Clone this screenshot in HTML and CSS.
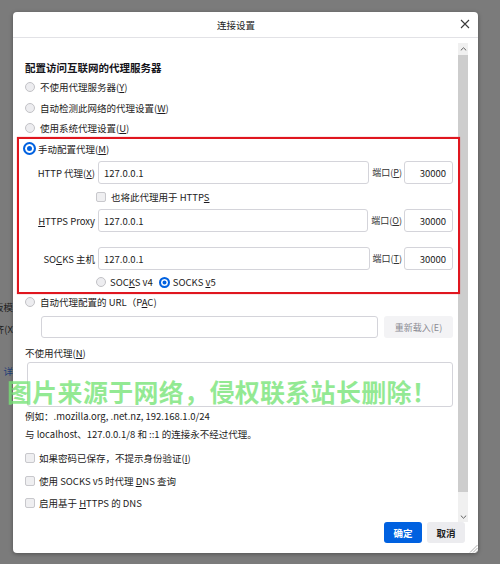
FILE: index.html
```html
<!DOCTYPE html>
<html lang="zh-CN">
<head>
<meta charset="utf-8">
<title>连接设置</title>
<link rel="stylesheet" href="styles.css">
</head>
<body>
<div class="page">
  <div class="bg-col">
    <div class="bg-line l1">栏板模</div>
    <div class="bg-line l2">对齐(X</div>
    <div class="bg-line l3 link">详</div>
  </div>
</div>

<div class="dialog">
  <div class="header">
    <div class="title">连接设置</div>
    <svg class="close" width="10" height="10" viewBox="0 0 10 10"><path d="M1 1L9 9M9 1L1 9" stroke="#3a3a3a" stroke-width="1.1" fill="none"/></svg>
  </div>
  <div class="main">
    <div class="content">
      <div class="heading">配置访问互联网的代理服务器</div>
      <div class="row r-radio"><span class="radio"></span><span>不使用代理服务器(<u>Y</u>)</span></div>
      <div class="row r-radio"><span class="radio"></span><span>自动检测此网络的代理设置(<u>W</u>)</span></div>
      <div class="row r-radio"><span class="radio"></span><span>使用系统代理设置(<u>U</u>)</span></div>
      <div class="row r-radio"><span class="radio on big"></span><span>手动配置代理(<u>M</u>)</span></div>

      <div class="proxy-row first">
        <span class="plabel">HTTP 代理(<u>X</u>)</span>
        <span class="input">127.0.0.1</span>
        <span class="portlabel">端口(<u>P</u>)</span>
        <span class="input port">30000</span>
      </div>
      <div class="row r-check"><span class="check"></span><span>也将此代理用于 HTTP<u>S</u></span></div>
      <div class="proxy-row">
        <span class="plabel"><u>H</u>TTPS Proxy</span>
        <span class="input">127.0.0.1</span>
        <span class="portlabel">端口(<u>O</u>)</span>
        <span class="input port">30000</span>
      </div>
      <div class="proxy-row socks">
        <span class="plabel">SO<u>C</u>KS 主机</span>
        <span class="input">127.0.0.1</span>
        <span class="portlabel">端口(<u>T</u>)</span>
        <span class="input port">30000</span>
      </div>
      <div class="row r-socksv">
        <span class="radio"></span><span>SOC<u>K</u>S v4</span>
        <span class="radio on v5"></span><span>SOCKS <u>v</u>5</span>
      </div>

      <div class="row r-pac"><span class="radio"></span><span>自动代理配置的 URL（P<u>A</u>C)</span></div>
      <div class="pac-row">
        <span class="input pac"></span>
        <span class="btn-reload">重新载入(E)</span>
      </div>

      <div class="noproxy-label">不使用代理(<u>N</u>)</div>
      <div class="textarea"></div>
      <div class="note">例如：.mozilla.org, .net.nz, 192.168.1.0/24</div>
      <div class="note">与 localhost、127.0.0.1/8 和 ::1 的连接永不经过代理。</div>

      <div class="checks">
        <div class="row r-check2"><span class="check"></span><span>如果密码已保存，不提示身份验证(<u>I</u>)</span></div>
        <div class="row r-check2"><span class="check"></span><span>使用 SOCKS v5 时代理 <u>D</u>NS 查询</span></div>
        <div class="row r-check2"><span class="check"></span><span>启用基于 <u>H</u>TTPS 的 DNS</span></div>
      </div>
    </div>
    <div class="scrollbar">
      <div class="sb-arrow up"><svg width="7" height="4" viewBox="0 0 7 4"><path d="M0.8 3.4L3.5 0.8L6.2 3.4" stroke="#606060" stroke-width="1" fill="none"/></svg></div>
      <div class="sb-thumb"></div>
      <div class="sb-track"></div>
      <div class="sb-arrow down"><svg width="7" height="4" viewBox="0 0 7 4"><path d="M0.8 0.6L3.5 3.2L6.2 0.6" stroke="#606060" stroke-width="1" fill="none"/></svg></div>
    </div>
  </div>
  <div class="footer">
    <span class="btn primary">确定</span>
    <span class="btn">取消</span>
  </div>
  <svg class="grip" width="9" height="9" viewBox="0 0 9 9"><path d="M8.5 1L1 8.5M8.5 4L4 8.5M8.5 7L7 8.5" stroke="#9a9a9a" stroke-width="0.8" fill="none"/></svg>
  <div class="redbox"></div>
</div>

<div class="watermark">图片来源于网络，侵权联系站长删除！</div>
</body>
</html>
```

FILE: styles.css
```css
html, body {
  margin: 0;
  padding: 0;
}
body {
  width: 500px;
  height: 564px;
  overflow: hidden;
  background: #7b7b7b;
  font-family: "Segoe UI", "Noto Sans CJK SC", "Noto Sans", sans-serif;
  font-size: 9.5px;
  color: #1c1b22;
  position: relative;
}
u { text-underline-offset: 1px; }

.page {
  width: 500px;
  height: 564px;
}
.bg-col {
  width: 13px;
  overflow: hidden;
  padding-top: 300px;
  display: flex;
  flex-direction: column;
}
.bg-line {
  display: flex;
  justify-content: flex-end;
  white-space: nowrap;
  font-size: 9.5px;
  color: #1e1e1e;
  line-height: 14px;
}
.bg-line.l2 { margin-top: 8px; }
.bg-line.l3 { margin-top: 28px; color: #1f3f78; }

.dialog {
  position: absolute;
  left: 13px;
  top: 12px;
  width: 465px;
  height: 541px;
  background: #fff;
  border-radius: 4px;
  box-shadow: 0 1px 4px rgba(0,0,0,0.35);
  display: flex;
  flex-direction: column;
}
.header {
  height: 25px;
  border-bottom: 1px solid #e2e2e6;
  display: flex;
  align-items: center;
  justify-content: center;
  position: relative;
  flex: none;
}
.title {
  font-size: 9.5px;
  color: #222;
  margin-right: 19px;
}
.close {
  position: absolute;
  right: 8px;
  top: 7px;
}

.main {
  flex: 1;
  display: flex;
  min-height: 0;
}
.content {
  width: 445px;
  box-sizing: border-box;
  padding: 23px 5px 0 12px;
  display: flex;
  flex-direction: column;
}
.heading {
  font-size: 10.5px;
  font-weight: 700;
  line-height: 14px;
  color: #15141a;
}
.row {
  display: flex;
  align-items: center;
  white-space: nowrap;
}
.r-radio { height: 20.5px; }
.heading + .r-radio { margin-top: 2px; }

.radio {
  width: 10px;
  height: 10px;
  box-sizing: border-box;
  border: 1px solid #c2c2c6;
  background: #ededf0;
  border-radius: 50%;
  margin-right: 5px;
  flex: none;
}
.radio.on {
  border: 2px solid #0061e0;
  background: #fff;
  box-shadow: inset 0 0 0 1.5px #fff, inset 0 0 0 5px #0061e0;
  width: 11px;
  height: 11px;
}
.radio.big {
  width: 13px;
  height: 13px;
  margin-left: -2px;
  margin-right: 2px;
  box-shadow: inset 0 0 0 2px #fff, inset 0 0 0 6px #0061e0;
}

.proxy-row {
  display: flex;
  align-items: center;
  height: 23px;
  white-space: nowrap;
}
.proxy-row.first { margin-top: 2px; }
.proxy-row.socks { margin-top: 15px; }
.plabel {
  width: 71px;
  flex: none;
  text-align: right;
  margin-right: 2px;
  box-sizing: border-box;
  padding-right: 1px;
}
.input {
  flex: 1;
  height: 23px;
  box-sizing: border-box;
  border: 1px solid #d4d4da;
  border-radius: 3px;
  background: #fff;
  padding-left: 5px;
  display: flex;
  align-items: center;
  color: #1c1b22;
}
.input.port {
  flex: none;
  width: 49px;
  justify-content: flex-end;
  padding: 0 6px 0 0;
}
.portlabel {
  margin: 0 2px 0 3px;
  font-size: 9px;
  color: #333;
}

.r-check { height: 25px; padding-left: 71px; }
.check {
  width: 10px;
  height: 10px;
  box-sizing: border-box;
  border: 1px solid #c8c8cc;
  background: #efeff1;
  border-radius: 2px;
  margin-right: 5px;
  flex: none;
}

.r-socksv { height: 24px; padding-left: 71px; }
.r-socksv .radio { margin-right: 4px; }
.radio.v5 { margin-left: 6px; margin-right: 3px; }

.r-pac { height: 16px; }
.pac-row {
  display: flex;
  margin-top: 6px;
  height: 22px;
  padding-left: 16px;
}
.input.pac { height: 22px; }
.btn-reload {
  width: 69px;
  flex: none;
  margin-left: 6px;
  background: #f3f3f5;
  border-radius: 3px;
  color: #8a8a92;
  font-size: 9px;
  display: flex;
  align-items: center;
  justify-content: center;
}

.noproxy-label {
  margin-top: 8px;
  line-height: 14px;
}
.textarea {
  margin: 2px 0 0 2px;
  height: 45px;
  box-sizing: border-box;
  border: 1px solid #d4d4da;
  border-radius: 3px;
}
.note {
  line-height: 18px;
  white-space: nowrap;
}
.checks { margin-top: 4px; }
.r-check2 { height: 22.5px; }
.r-check2 .check { margin-right: 4px; }

.scrollbar {
  width: 10px;
  margin: 5px 10px 0 0;
  display: flex;
  flex-direction: column;
  flex: none;
}
.sb-arrow {
  height: 12px;
  display: flex;
  align-items: center;
  justify-content: center;
  background: #f0f0f0;
}
.sb-thumb {
  flex: 1;
  background: #cdcdcd;
}
.sb-track {
  height: 20px;
  background: #f0f0f0;
}
.sb-arrow.down { height: 10px; }

.footer {
  flex: none;
  height: 31px;
  box-sizing: border-box;
  padding: 0 13px 10px 0;
  display: flex;
  justify-content: flex-end;
  align-items: flex-end;
  gap: 5px;
}
.btn {
  width: 38px;
  height: 21px;
  border-radius: 3px;
  background: #ececef;
  display: flex;
  align-items: center;
  justify-content: center;
  font-size: 9.5px;
  font-weight: 700;
  color: #222;
}
.btn.primary {
  background: #0061e0;
  color: #fff;
}
.grip {
  position: absolute;
  right: 0;
  bottom: 0;
}
.redbox {
  position: absolute;
  left: 4px;
  top: 125px;
  width: 443px;
  height: 157px;
  box-sizing: border-box;
  border: 2px solid #e0161f;
  box-shadow: 0 0 1px rgba(224,22,31,0.6);
  pointer-events: none;
}
.watermark {
  position: absolute;
  left: 7px;
  top: 374px;
  font-family: "Noto Sans CJK SC", sans-serif;
  font-size: 25px;
  font-weight: 700;
  letter-spacing: 0.3px;
  line-height: 34px;
  color: rgba(118, 228, 118, 0.78);
  white-space: nowrap;
}
```
